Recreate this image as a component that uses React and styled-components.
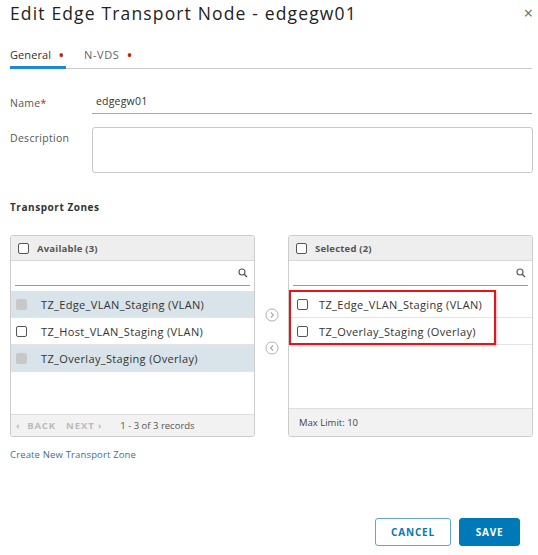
import React from "react";
import styled, { createGlobalStyle } from "styled-components";

const GlobalStyle = createGlobalStyle`
  body {
    margin: 0;
    background: #fff;
    font-family: "Open Sans", Lato, sans-serif;
    color: #333;
  }
`;

const available = [
  { name: "TZ_Edge_VLAN_Staging (VLAN)", taken: true },
  { name: "TZ_Host_VLAN_Staging (VLAN)", taken: false },
  { name: "TZ_Overlay_Staging (Overlay)", taken: true },
];

const selected = ["TZ_Edge_VLAN_Staging (VLAN)", "TZ_Overlay_Staging (Overlay)"];

const SearchIcon = () => (
  <svg width="10" height="10" viewBox="0 0 10 10">
    <circle cx="4" cy="4" r="3" fill="none" stroke="#555" strokeWidth="1.1" />
    <line x1="6.2" y1="6.2" x2="9" y2="9" stroke="#555" strokeWidth="1.3" />
  </svg>
);

const MoveIcon = ({ dir }) => (
  <svg width="14" height="14" viewBox="0 0 15 15">
    <circle cx="7.5" cy="7.5" r="6.5" fill="none" stroke="#aaa" strokeWidth="1" />
    {dir === "right" ? (
      <polyline points="6.3,4.8 9,7.5 6.3,10.2" fill="none" stroke="#aaa" strokeWidth="1.2" />
    ) : (
      <polyline points="8.7,4.8 6,7.5 8.7,10.2" fill="none" stroke="#aaa" strokeWidth="1.2" />
    )}
  </svg>
);

const EditEdgeNode = () => {
  return (
    <Modal>
      <TitleRow>
        <h1>Edit Edge Transport Node - edgegw01</h1>
        <Close>×</Close>
      </TitleRow>

      <Tabs>
        <Tab active>
          General<Dot>•</Dot>
        </Tab>
        <Tab>
          N-VDS<Dot>•</Dot>
        </Tab>
      </Tabs>

      <FieldRow>
        <Label>
          Name<Req>*</Req>
        </Label>
        <LineInput>edgegw01</LineInput>
      </FieldRow>
      <FieldRow top>
        <Label>Description</Label>
        <TextArea />
      </FieldRow>

      <Section>Transport Zones</Section>

      <Transfer>
        <Panel>
          <PanelHead>
            <Check />
            Available (3)
          </PanelHead>
          <SearchBox>
            <div>
              <SearchIcon />
            </div>
          </SearchBox>
          <List>
            {available.map((item) => (
              <Row key={item.name} taken={item.taken}>
                <Check disabled={item.taken} />
                <span>{item.name}</span>
              </Row>
            ))}
          </List>
          <PanelFoot>
            <Pager>‹ &nbsp;BACK</Pager>
            <Pager>NEXT ›</Pager>
            <Records>1 - 3 of 3 records</Records>
          </PanelFoot>
        </Panel>

        <Arrows>
          <MoveIcon dir="right" />
          <MoveIcon dir="left" />
        </Arrows>

        <Panel>
          <PanelHead>
            <Check />
            Selected (2)
          </PanelHead>
          <SearchBox>
            <div>
              <SearchIcon />
            </div>
          </SearchBox>
          <List>
            {selected.map((name) => (
              <Row key={name} right>
                <Check />
                <span>{name}</span>
              </Row>
            ))}
            <Highlight />
          </List>
          <PanelFoot tall>Max Limit: 10</PanelFoot>
        </Panel>
      </Transfer>

      <Link>Create New Transport Zone</Link>

      <Buttons>
        <Button>CANCEL</Button>
        <Button primary>SAVE</Button>
      </Buttons>
    </Modal>
  );
};

const App = () => (
  <>
    <GlobalStyle />
    <EditEdgeNode />
  </>
);

const Modal = styled.div`
  width: 538px;
  height: 555px;
  box-sizing: border-box;
  padding: 0 5px 0 10px;
  display: flex;
  flex-direction: column;
`;

const TitleRow = styled.div`
  display: flex;
  justify-content: space-between;
  align-items: center;
  height: 25px;

  h1 {
    margin: 0;
    font-size: 17.5px;
    line-height: 24px;
    font-weight: 400;
    color: #222;
    letter-spacing: 1.15px;
  }
`;

const Close = styled.span`
  font-size: 16px;
  color: #666;
`;

const Tabs = styled.div`
  display: flex;
  margin-top: 20px;
  border-bottom: 1px solid #ccc;
  margin-right: 1px;
`;

const Tab = styled.div`
  font-size: 11px;
  color: ${(p) => (p.active ? "#333" : "#666")};
  letter-spacing: ${(p) => (p.active ? "0.1px" : "0.6px")};
  padding: 2px 1px 4px 0;
  margin-right: 18px;
  border-bottom: ${(p) => (p.active ? "3px solid #1b8bd0" : "3px solid transparent")};
  margin-bottom: -1px;
  width: ${(p) => (p.active ? "55px" : "auto")};
  display: flex;
  align-items: center;
`;

const Dot = styled.span`
  color: #c92100;
  font-size: 16px;
  line-height: 10px;
  margin-left: 7px;
`;

const FieldRow = styled.div`
  display: flex;
  align-items: ${(p) => (p.top ? "flex-start" : "center")};
  margin-top: ${(p) => (p.top ? "17px" : "23px")};
`;

const Label = styled.div`
  width: 82px;
  font-size: 10.5px;
  color: #555;
  letter-spacing: 0.3px;
`;

const Req = styled.span`
  color: #c92100;
`;

const LineInput = styled.div`
  flex: 1;
  font-size: 10.5px;
  color: #333;
  padding: 2px 0 5px 4px;
  border-bottom: 1px solid #aaa;
  margin-right: 1px;
  letter-spacing: 0.2px;
`;

const TextArea = styled.div`
  flex: 1;
  height: 44px;
  border: 1px solid #c8c8c8;
  border-radius: 3px;
  margin-top: -4px;
`;

const Section = styled.div`
  font-size: 10px;
  font-weight: 700;
  color: #333;
  letter-spacing: 0.55px;
  margin-top: 27px;
`;

const Transfer = styled.div`
  display: grid;
  grid-template-columns: 245px 33px 245px;
  margin-top: 21px;
  height: 202px;
`;

const Panel = styled.div`
  border: 1px solid #ccc;
  border-radius: 3px;
  display: flex;
  flex-direction: column;
  overflow: hidden;
`;

const PanelHead = styled.div`
  height: 24px;
  background: #eee;
  border-bottom: 1px solid #d8d8d8;
  display: flex;
  align-items: center;
  padding-left: 7px;
  gap: 8px;
  font-size: 9.5px;
  font-weight: 700;
  letter-spacing: 0.2px;
  color: #555;
`;

const Check = styled.span`
  display: inline-block;
  width: ${(p) => (p.disabled ? "11px" : "9px")};
  height: ${(p) => (p.disabled ? "11px" : "9px")};
  border: ${(p) => (p.disabled ? "none" : "1px solid #555")};
  background: ${(p) => (p.disabled ? "#c8c8c8" : "#fff")};
  border-radius: 2px;
  flex-shrink: 0;
`;

const SearchBox = styled.div`
  height: 29px;
  padding: 0 4px;
  box-sizing: border-box;

  div {
    height: 24px;
    border-bottom: 1px solid #999;
    display: flex;
    align-items: center;
    justify-content: flex-end;
    padding-right: 2px;
  }
`;

const List = styled.div`
  flex: 1;
  position: relative;
  padding-top: 1px;
`;

const Row = styled.div`
  height: 26px;
  display: flex;
  align-items: center;
  padding-left: ${(p) => (p.right ? "8px" : "5px")};
  gap: ${(p) => (p.right ? "11px" : "14px")};
  background: ${(p) => (p.taken ? "#d9e3ea" : "#fff")};
  border-bottom: 1px solid #e4e4e4;
  font-size: 11px;
  letter-spacing: 0.35px;
  color: #333;
`;

const Highlight = styled.div`
  position: absolute;
  left: 0;
  top: 0;
  box-sizing: border-box;
  width: 207px;
  height: 55px;
  border: 2px solid #e8141c;
  box-shadow: 1px 1px 2px rgba(0, 0, 0, 0.25);
`;

const PanelFoot = styled.div`
  height: ${(p) => (p.tall ? "27px" : "21px")};
  background: #f2f2f2;
  border-top: 1px solid #ddd;
  display: flex;
  align-items: center;
  padding-left: ${(p) => (p.tall ? "10px" : "5px")};
  font-size: 9.5px;
  color: #444;
`;

const Pager = styled.span`
  color: #bbb;
  font-weight: 700;
  font-size: 9.5px;
  letter-spacing: 0.9px;
  margin-right: 10px;
`;

const Records = styled.span`
  margin-left: 8px;
  color: #555;
  font-size: 9.5px;
`;

const Arrows = styled.div`
  display: flex;
  flex-direction: column;
  align-items: center;
  gap: 19px;
  padding-top: 73px;
`;

const Link = styled.div`
  font-size: 9.5px;
  color: #3d6ea1;
  margin-top: 11px;
  letter-spacing: 0.15px;
`;

const Buttons = styled.div`
  display: flex;
  justify-content: flex-end;
  gap: 8px;
  margin-top: 57px;
  margin-right: 13px;
`;

const Button = styled.div`
  height: 28px;
  box-sizing: border-box;
  display: flex;
  align-items: center;
  justify-content: center;
  width: ${(p) => (p.primary ? "61px" : "76px")};
  border-radius: 3px;
  font-size: 10px;
  font-weight: 700;
  letter-spacing: 0.8px;
  border: 1px solid ${(p) => (p.primary ? "#0079b8" : "#5fa6d0")};
  background: ${(p) => (p.primary ? "#0079b8" : "#fff")};
  color: ${(p) => (p.primary ? "#fff" : "#0079b8")};
`;

export default App;
